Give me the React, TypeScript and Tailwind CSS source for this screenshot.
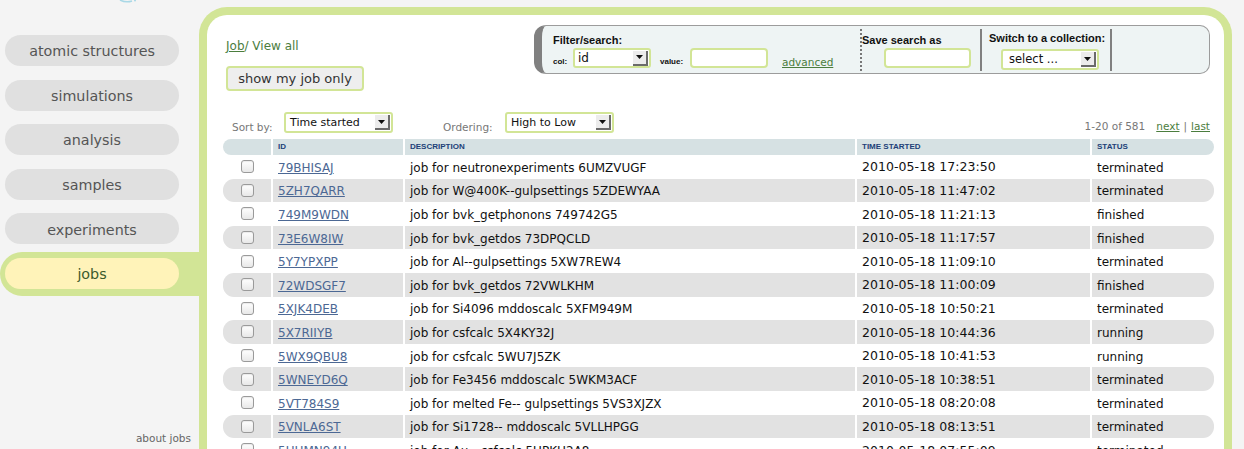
import React from "react";

const rows: [string, string, string, string][] = [
  ["79BHISAJ", "job for neutronexperiments 6UMZVUGF", "2010-05-18 17:23:50", "terminated"],
  ["5ZH7QARR", "job for W@400K--gulpsettings 5ZDEWYAA", "2010-05-18 11:47:02", "terminated"],
  ["749M9WDN", "job for bvk_getphonons 749742G5", "2010-05-18 11:21:13", "finished"],
  ["73E6W8IW", "job for bvk_getdos 73DPQCLD", "2010-05-18 11:17:57", "finished"],
  ["5Y7YPXPP", "job for Al--gulpsettings 5XW7REW4", "2010-05-18 11:09:10", "terminated"],
  ["72WDSGF7", "job for bvk_getdos 72VWLKHM", "2010-05-18 11:00:09", "finished"],
  ["5XJK4DEB", "job for Si4096 mddoscalc 5XFM949M", "2010-05-18 10:50:21", "terminated"],
  ["5X7RIIYB", "job for csfcalc 5X4KY32J", "2010-05-18 10:44:36", "running"],
  ["5WX9QBU8", "job for csfcalc 5WU7J5ZK", "2010-05-18 10:41:53", "running"],
  ["5WNEYD6Q", "job for Fe3456 mddoscalc 5WKM3ACF", "2010-05-18 10:38:51", "terminated"],
  ["5VT784S9", "job for melted Fe-- gulpsettings 5VS3XJZX", "2010-05-18 08:20:08", "terminated"],
  ["5VNLA6ST", "job for Si1728-- mddoscalc 5VLLHPGG", "2010-05-18 08:13:51", "terminated"],
  ["5UHMN94U", "job for Au-- csfcalc 5UPKH2A8", "2010-05-18 07:55:09", "terminated"],
];

const navItems = ["atomic structures", "simulations", "analysis", "samples", "experiments"];

function Arrow() {
  return (
    <div className="flex h-[15px] w-[15px] shrink-0 items-center justify-center border-b-2 border-r-2 border-[#6b6b6b] bg-[#ececec]">
      <svg width="7" height="4" viewBox="0 0 7 4">
        <path d="M0 0H7L3.5 4Z" fill="#111" />
      </svg>
    </div>
  );
}

function Checkbox() {
  return (
    <div className="h-[13px] w-[13px] rounded-[3px] border border-[#9a9a9a] bg-gradient-to-b from-white to-[#e8e8e8] shadow-[inset_0_1px_1px_rgba(0,0,0,0.08)]" />
  );
}

export default function App() {
  return (
    <div className="flex h-[449px] w-[1244px] overflow-hidden bg-[#f4f4f4] font-['DejaVu_Sans',sans-serif]">
      {/* Sidebar */}
      <div className="flex h-[449px] w-[199px] shrink-0 flex-col">
        <div className="h-[3px] pl-[118px]">
          <svg width="20" height="3" viewBox="0 0 20 3">
            <path d="M2 0 Q8 3 14 1" stroke="#a9d8e6" strokeWidth="1.5" fill="none" />
            <circle cx="17" cy="0.5" r="1" fill="#a9d8e6" />
          </svg>
        </div>
        <div className="mt-[32px] flex flex-col gap-[13.6px]">
          {navItems.map((n) => (
            <div
              key={n}
              className="ml-[5px] flex h-[31px] w-[174px] items-center justify-center rounded-full bg-[#e0e0e0] pt-[3px] text-[14.3px] text-[#555]"
            >
              {n}
            </div>
          ))}
          <div className="-mt-[6px] flex h-[44px] items-center rounded-l-full bg-[#d2e596]">
            <div className="ml-[5px] flex h-[31px] w-[174px] items-center justify-center rounded-full bg-[#fff3b9] pt-[2px] text-[14.3px] text-[#3b5a2c]">
              jobs
            </div>
          </div>
        </div>
        <div className="mt-auto pb-[4px] pr-[8px] text-right text-[10.5px] leading-[13px] text-[#666]">about jobs</div>
      </div>

      {/* Main panel */}
      <div className="mt-[7px] h-[442px] w-[1033px] shrink-0 overflow-hidden rounded-t-[28px] border-x-8 border-t-8 border-[#d2e596] bg-white pl-[16px] pr-[9px]">
        {/* Top row */}
        <div className="flex items-start">
          <div className="pl-[3px] pt-[24px]">
            <div className="text-[12px] leading-[15px] text-[#4b7d3e]">
              <span className="underline">Job</span>/ View all
            </div>
            <div className="mt-[12px] flex h-[25px] w-[138px] items-center justify-center rounded-[4px] border-2 border-[#d2e596] bg-[#eeeeee] text-[13px] text-[#333]">
              show my job only
            </div>
          </div>

          <div className="ml-auto mr-[5px] mt-[10px] flex h-[49px] w-[676px] rounded-l-[12px] rounded-r-[10px] border border-l-[8px] border-[#9c9c9c] border-l-[#808080] bg-[#eef4f4] font-['Liberation_Sans',sans-serif] text-[#111]">
            {/* Filter section */}
            <div className="w-[318px] pl-[11px] pt-[8px]">
              <div className="text-[11px] font-bold leading-[13px]">Filter/search:</div>
              <div className="mt-[1px] flex items-end">
                <span className="w-[20px] pb-[2px] text-[8px] font-bold leading-none">col:</span>
                <div className="flex h-[20px] w-[78px] items-center rounded-[3px] border-2 border-[#d2e596] bg-white pr-[1px]">
                  <span className="flex-1 pl-[3px] font-['DejaVu_Sans',sans-serif] text-[12px] leading-none">id</span>
                  <Arrow />
                </div>
                <span className="ml-[9px] w-[30px] pb-[2px] text-[8px] font-bold leading-none">value:</span>
                <div className="h-[20px] w-[78px] rounded-[4px] border-2 border-[#d2e596] bg-white" />
                <span className="ml-[14px] pb-[1px] font-['DejaVu_Sans',sans-serif] text-[10.5px] leading-none text-[#4b7d3e] underline">
                  advanced
                </span>
              </div>
            </div>
            <div className="mt-[3px] h-[42px] border-l-2 border-dotted border-[#777]" />
            {/* Save search */}
            <div className="w-[118px] pt-[8px]">
              <div className="text-[11px] font-bold leading-[13px]">Save search as</div>
              <div className="ml-[22px] mt-[1px] h-[20px] w-[87px] rounded-[4px] border-2 border-[#d2e596] bg-white" />
            </div>
            <div className="mt-[3px] h-[42px] w-[2px] bg-[#808080]" />
            {/* Switch collection */}
            <div className="w-[128px] pl-[7px] pt-[6px]">
              <div className="text-[11px] font-bold leading-[13px]">Switch to a collection:</div>
              <div className="ml-[12px] mt-[4px] flex h-[21px] w-[98px] items-center rounded-[3px] border-2 border-[#d2e596] bg-white pr-[1px]">
                <span className="flex-1 pl-[6px] font-['DejaVu_Sans',sans-serif] text-[11.5px] leading-none">select ...</span>
                <Arrow />
              </div>
            </div>
            <div className="mt-[3px] h-[42px] w-[2px] bg-[#808080]" />
          </div>
        </div>

        {/* Sort row */}
        <div className="mt-[21px] flex h-[21px] items-end text-[10.5px] text-[#777]">
          <span className="w-[61px] pb-[1px] pl-[9px] leading-none">Sort by:</span>
          <div className="flex h-[21px] w-[109px] items-center rounded-[3px] border-2 border-[#d2e596] bg-white pr-[1px]">
            <span className="flex-1 pl-[4px] text-[11px] leading-none text-[#111]">Time started</span>
            <Arrow />
          </div>
          <span className="ml-[50px] w-[62px] pb-[1px] leading-none">Ordering:</span>
          <div className="flex h-[21px] w-[109px] items-center rounded-[3px] border-2 border-[#d2e596] bg-white pr-[1px]">
            <span className="flex-1 pl-[4px] text-[11px] leading-none text-[#111]">High to Low</span>
            <Arrow />
          </div>
          <span className="ml-auto pb-[2px] leading-none">1-20 of 581</span>
          <span className="ml-[11px] pb-[2px] leading-none text-[#4b7d3e] underline">next</span>
          <span className="mx-[4px] pb-[2px] leading-none text-[#777]">|</span>
          <span className="mr-[5px] pb-[2px] leading-none text-[#4b7d3e] underline">last</span>
        </div>

        {/* Table */}
        <div className="mt-[6px] w-[991px]">
          <div className="grid h-[16px] grid-cols-[48px_130px_450px_233px_122px] gap-x-[2px] font-['Liberation_Sans',sans-serif] text-[8px] font-bold text-[#213f78]">
            <div className="rounded-l-full bg-[#d6e1e3]" />
            <div className="flex items-center bg-[#d6e1e3] pl-[5px]">ID</div>
            <div className="flex items-center bg-[#d6e1e3] pl-[5px]">DESCRIPTION</div>
            <div className="flex items-center bg-[#d6e1e3] pl-[5px]">TIME STARTED</div>
            <div className="flex items-center rounded-r-full bg-[#d6e1e3] pl-[5px]">STATUS</div>
          </div>
          {rows.map((r, i) => {
            const bg = i % 2 === 1 ? "bg-[#e2e2e2]" : "bg-white";
            return (
              <div
                key={r[0]}
                className="grid h-[23.6px] grid-cols-[48px_130px_450px_233px_122px] gap-x-[2px] text-[12px] text-[#111]"
              >
                <div className={`flex items-center justify-center rounded-l-[11px] ${bg}`}>
                  <Checkbox />
                </div>
                <div className={`flex items-center pl-[5px] pt-[2px] ${bg}`}>
                  <span className="text-[#4c6894] underline decoration-[#4c6894]">{r[0]}</span>
                </div>
                <div className={`flex items-center pl-[5px] pt-[2px] ${bg}`}>{r[1]}</div>
                <div className={`flex items-center pl-[5px] pt-[2px] text-[12.5px] tracking-[0.05px] ${bg}`}>{r[2]}</div>
                <div className={`flex items-center rounded-r-[11px] pl-[5px] pt-[2px] ${bg}`}>{r[3]}</div>
              </div>
            );
          })}
        </div>
      </div>
    </div>
  );
}
